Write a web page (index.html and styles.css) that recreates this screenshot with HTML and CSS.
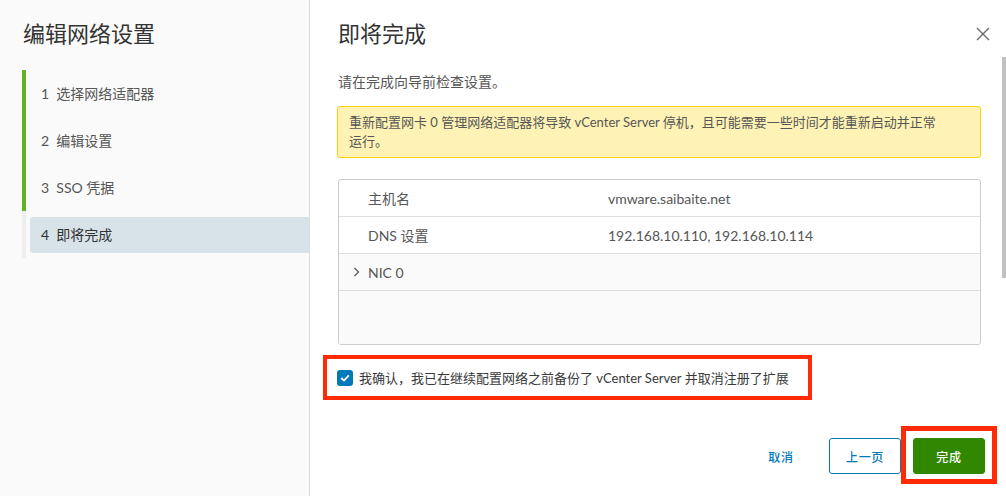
FILE: index.html
```html
<!DOCTYPE html>
<html lang="zh-CN">
<head>
<meta charset="utf-8">
<title>编辑网络设置</title>
<link rel="stylesheet" href="styles.css">
</head>
<body>
<div class="wizard">
  <aside class="nav">
    <h1 class="nav-title">编辑网络设置</h1>
    <ol class="steps">
      <li class="step done"><span class="step-label">1&nbsp;&nbsp;选择网络适配器</span></li>
      <li class="step done"><span class="step-label">2&nbsp;&nbsp;编辑设置</span></li>
      <li class="step done"><span class="step-label">3&nbsp;&nbsp;SSO 凭据</span></li>
      <li class="step current"><span class="step-label">4&nbsp;&nbsp;即将完成</span></li>
    </ol>
  </aside>

  <main class="content">
    <header class="content-header">
      <h2 class="content-title">即将完成</h2>
      <button class="close" type="button" aria-label="关闭">
        <svg width="14" height="14" viewBox="0 0 14 14"><path d="M1 1 L13 13 M13 1 L1 13" stroke="#6a6a6a" stroke-width="1.4" fill="none"/></svg>
      </button>
    </header>

    <p class="intro">请在完成向导前检查设置。</p>

    <div class="alert">重新配置网卡 0 管理网络适配器将导致 vCenter Server 停机，且可能需要一些时间才能重新启动并正常运行。</div>

    <div class="summary">
      <div class="row">
        <span class="cell-label">主机名</span>
        <span class="cell-value">vmware.saibaite.net</span>
      </div>
      <div class="row">
        <span class="cell-label">DNS 设置</span>
        <span class="cell-value">192.168.10.110, 192.168.10.114</span>
      </div>
      <div class="row row-group">
        <span class="caret"><svg width="7" height="10" viewBox="0 0 7 10"><path d="M1.5 1 L5.5 5 L1.5 9" stroke="#555" stroke-width="1.2" fill="none"/></svg></span>
        <span class="group-label">NIC 0</span>
      </div>
      <div class="row row-empty"></div>
    </div>

    <label class="confirm">
      <span class="checkbox"><svg width="10" height="8" viewBox="0 0 10 8"><path d="M1.2 4 L4 6.6 L8.8 1.4" stroke="#fff" stroke-width="1.8" fill="none"/></svg></span>
      <span class="confirm-text">我确认，我已在继续配置网络之前备份了 vCenter Server 并取消注册了扩展</span>
    </label>

    <footer class="footer">
      <button class="btn btn-link" type="button">取消</button>
      <button class="btn btn-outline" type="button">上一页</button>
      <span class="finish-wrap"><button class="btn btn-success" type="button">完成</button></span>
    </footer>

    <div class="scroll-thumb"></div>
  </main>
</div>
</body>
</html>
```

FILE: styles.css
```css
* {
  box-sizing: border-box;
}

html, body {
  margin: 0;
  padding: 0;
  width: 1006px;
  height: 496px;
  overflow: hidden;
  background: #fff;
}

body {
  font-family: "Lato", "Noto Sans CJK SC", sans-serif;
  font-size: 14px;
  color: #565656;
}

.wizard {
  display: flex;
  height: 496px;
}

/* Left step navigation */
.nav {
  width: 310px;
  flex: none;
  background: #fafafa;
  border-right: 1px solid #dddddd;
  padding: 18px 0 0 22px;
}

.nav-title {
  margin: 0 0 20px 1px;
  font-size: 22px;
  line-height: 32px;
  font-weight: 400;
  color: #333;
}

.steps {
  list-style: none;
  margin: 0;
  padding: 0;
}

.step {
  height: 47px;
  padding: 6px 0 5px 4px;
  border-left: 4px solid #eeeeee;
}

.step.done {
  border-left-color: #62b31f;
}

.step-label {
  display: block;
  height: 36px;
  line-height: 36px;
  padding-left: 11px;
  font-size: 14px;
  color: #565656;
  border-radius: 3px 0 0 3px;
}

.step.current .step-label {
  background: #d8e3e9;
  color: #313131;
}

/* Right content */
.content {
  flex: 1;
  position: relative;
  padding: 18px 25px 0 28px;
}

.content-header {
  display: flex;
  justify-content: space-between;
  align-items: center;
  margin-right: -14px;
}

.content-title {
  margin: 0;
  font-size: 22px;
  line-height: 32px;
  font-weight: 400;
  color: #333;
}

.close {
  width: 24px;
  height: 24px;
  padding: 0;
  border: 0;
  background: transparent;
  display: flex;
  align-items: center;
  justify-content: center;
}

.intro {
  margin: 22px 0 0;
  line-height: 20px;
}

.alert {
  margin-top: 14px;
  margin-left: -1px;
  padding: 6px 41px 6px 11px;
  line-height: 19px;
  font-size: 13px;
  background: #fef3b5;
  border: 1px solid #fdd008;
  border-radius: 3px;
  color: #565656;
}

.summary {
  margin-top: 21px;
  border: 1px solid #cccccc;
  border-radius: 3px;
  overflow: hidden;
}

.row {
  display: flex;
  align-items: center;
  height: 37px;
  border-bottom: 1px solid #dddddd;
}

.row:last-child {
  border-bottom: 0;
  height: 53px;
}

.cell-label {
  width: 269px;
  padding-left: 29px;
}

.row-group,
.row-empty {
  background: #fafafa;
}

.caret {
  width: 29px;
  padding-left: 14px;
  display: flex;
  align-items: center;
}

/* Confirmation checkbox, outlined in red */
.confirm {
  display: flex;
  align-items: center;
  width: fit-content;
  margin: 10px 0 0 -15px;
  padding: 9px 19px 8px 10px;
  border: 4px solid #ff2b06;
  line-height: 20px;
  font-size: 13px;
}

.checkbox {
  width: 16px;
  height: 16px;
  border-radius: 3px;
  background: #0079b8;
  display: flex;
  align-items: center;
  justify-content: center;
  margin-right: 6px;
}

.confirm-text {
  color: #3a3a3a;
}

/* Footer buttons */
.footer {
  display: flex;
  justify-content: flex-end;
  align-items: flex-start;
  margin-top: 26px;
  margin-right: -16px;
}

.btn {
  font-family: "Lato", "Noto Sans CJK SC", sans-serif;
  width: 72px;
  height: 36px;
  font-size: 12px;
  letter-spacing: 0.06em;
  font-weight: 500;
  border-radius: 3px;
  padding: 0;
  margin-top: 12px;
  cursor: pointer;
}

.btn-link {
  background: transparent;
  border: 1px solid transparent;
  color: #0079b8;
  margin-right: 12px;
}

.btn-outline {
  background: #fff;
  border: 1px solid #0079b8;
  color: #0079b8;
}

.finish-wrap {
  display: block;
  border: 5px solid #ff2b06;
  padding: 7px 7px 5px 7px;
}

.btn-success {
  margin-top: 0;
  background: #318700;
  border: 1px solid #318700;
  color: #fff;
}

.scroll-thumb {
  position: absolute;
  right: 0;
  top: 57px;
  width: 4px;
  height: 221px;
  background: #c1c1c1;
}
```
